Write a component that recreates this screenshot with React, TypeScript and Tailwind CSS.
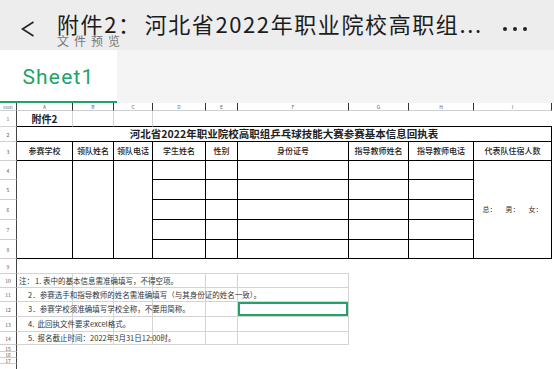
import React from "react";

const CJK = { fontFamily: '"Noto Sans CJK SC", "Noto Sans", sans-serif' };

const B = "border-black";

function RowHead({ n, row }: { n: string; row: string }) {
  return (
    <div
      className={`col-start-1 ${row} border-r border-b border-r-[#444] border-b-[#cfcfcf] flex items-center justify-center text-[5px] leading-none text-[#555]`}
    >
      {n}
    </div>
  );
}

export default function App() {
  const colLetters = ["A", "B", "C", "D", "E", "F", "G", "H", "I"];
  const colStarts = [
    "col-start-2",
    "col-start-3",
    "col-start-4",
    "col-start-5",
    "col-start-6",
    "col-start-7",
    "col-start-8",
    "col-start-9",
    "col-start-10",
  ];
  const heads = [
    "参赛学校",
    "领队姓名",
    "领队电话",
    "学生姓名",
    "性别",
    "身份证号",
    "指导教师姓名",
    "指导教师电话",
    "代表队住宿人数",
  ];
  const dhCols = ["col-start-5", "col-start-6", "col-start-7", "col-start-8", "col-start-9"];
  const dataRows = ["row-start-5", "row-start-6", "row-start-7", "row-start-8", "row-start-9"];
  const noteRows = ["row-start-11", "row-start-12", "row-start-13", "row-start-14", "row-start-15"];
  const noteCols = ["col-start-2", "col-start-3", "col-start-4", "col-start-5", "col-start-6", "col-start-7"];
  const notes = [
    "1. 表中的基本信息需准确填写，不得空项。",
    "2．参赛选手和指导教师的姓名需准确填写（与其身份证的姓名一致）。",
    "3．参赛学校须准确填写学校全称，不要用简称。",
    "4.  此回执文件要求excel格式。",
    "5.  报名截止时间：2022年3月31日12:00时。",
  ];
  const rowNums = [
    "row-start-2",
    "row-start-3",
    "row-start-4",
    "row-start-5",
    "row-start-6",
    "row-start-7",
    "row-start-8",
    "row-start-9",
    "row-start-10",
    "row-start-11",
    "row-start-12",
    "row-start-13",
    "row-start-14",
    "row-start-15",
    "row-start-16",
    "row-start-17",
    "row-start-18",
    "row-start-19",
  ];

  return (
    <div className="w-[554px] h-[369px] overflow-hidden bg-white" style={CJK}>
      {/* Top bar */}
      <div className="h-[50px] bg-[#ededed] flex items-start">
        <div className="w-[57px] pt-[21px] pl-[21px]">
          <svg width="14" height="16" viewBox="0 0 14 16">
            <polyline points="12.5,1 1.5,8 12.5,15" fill="none" stroke="#222" strokeWidth="1.6" />
          </svg>
        </div>
        <div className="flex flex-col pt-[13px]">
          <div className="text-[22px] leading-[20px] text-[#1c1c1c] whitespace-nowrap tracking-[1.6px]">
            附件2：<span className="ml-[3px]">河北省2022年职业院校高职组...</span>
          </div>
          <div className="text-[12px] leading-[11px] text-[#777] tracking-[5px] mt-[2px]">文件预览</div>
        </div>
        <div className="ml-auto mr-[27px] mt-[27px] flex gap-[6px]">
          <span className="w-[4px] h-[4px] rounded-full bg-[#222]" />
          <span className="w-[4px] h-[4px] rounded-full bg-[#222]" />
          <span className="w-[4px] h-[4px] rounded-full bg-[#222]" />
        </div>
      </div>

      {/* Sheet tab bar */}
      <div className="h-[53px] bg-[#f4f4f4] flex">
        <div className="w-[117px] h-full bg-white border-b-2 border-[#21a366] flex items-center justify-center">
          <span
            className="text-[21px] text-[#21a366] tracking-[1.2px] pt-[4px]"
            style={{ fontFamily: "Roboto, 'Noto Sans', sans-serif" }}
          >
            Sheet1
          </span>
        </div>
      </div>

      {/* Sheet grid */}
      <div className="grid grid-cols-[17px_56px_41px_39px_53px_32px_111px_60px_65px_78px_2px] grid-rows-[8px_16px_15px_19px_19px_20px_20px_20px_19px_15px_14px_14px_15px_15px_13px_7px_6px_6px_6px] text-[#222]">
        {/* corner */}
        <div className="col-start-1 row-start-1 border-r border-b border-r-[#444] border-b-[#cfcfcf] flex items-center justify-center text-[4px] leading-none text-[#666]">
          Excel
        </div>
        {colLetters.map((c, i) => (
          <div
            key={c}
            className={`${colStarts[i]} row-start-1 border-r border-b border-r-[#333] border-b-[#cfcfcf] flex items-center justify-center text-[5px] leading-none text-[#666]`}
          >
            {c}
          </div>
        ))}

        {/* row numbers */}
        {rowNums.map((r, i) => (
          <RowHead key={r} n={i < 17 ? String(i + 1) : ""} row={r} />
        ))}

        {/* row 1 */}
        <div className="col-start-2 row-start-2 border-r border-b border-r-[#d4d4d4] border-b-black flex items-center justify-center text-[10px] font-bold">
          附件2
        </div>
        <div className="col-start-3 row-start-2 border-r border-b border-r-[#d4d4d4] border-b-black" />
        <div className="col-start-4 row-start-2 border-r border-b border-r-[#d4d4d4] border-b-black" />
        <div className="col-start-5 col-span-6 row-start-2 border-b border-b-black" />

        {/* row 2 title */}
        <div className={`col-start-2 col-span-9 row-start-3 border-r border-b ${B} flex items-center justify-center text-[10.5px] font-bold whitespace-nowrap`}>
          河北省2022年职业院校高职组乒乓球技能大赛参赛基本信息回执表
        </div>

        {/* row 3 headers */}
        {heads.map((h, i) => (
          <div
            key={h}
            className={`${colStarts[i]} row-start-4 border-r border-b ${B} flex items-center justify-center text-[8px] font-medium whitespace-nowrap text-[#1a1a1a]`}
          >
            {h}
          </div>
        ))}

        {/* rows 4-8 */}
        <div className={`col-start-2 row-start-5 row-span-5 border-r border-b ${B}`} />
        <div className={`col-start-3 row-start-5 row-span-5 border-r border-b ${B}`} />
        <div className={`col-start-4 row-start-5 row-span-5 border-r border-b ${B}`} />
        {dataRows.map((r) =>
          dhCols.map((c) => <div key={r + c} className={`${c} ${r} border-r border-b ${B}`} />)
        )}
        <div className={`col-start-10 row-start-5 row-span-5 border-r border-b ${B} flex items-center justify-center gap-[9px] text-[7px] text-[#333]`}>
          <span>总：</span>
          <span>男：</span>
          <span>女：</span>
        </div>

        {/* row 9 */}
        <div className="col-start-2 col-span-6 row-start-10 border-b border-b-[#d4d4d4]" />

        {/* rows 10-14 notes */}
        {noteRows.map((r, ri) => (
          <React.Fragment key={r}>
            {noteCols.map((c, ci) => (
              <div
                key={c}
                className={`${c} ${r} border-r border-b border-[#d4d4d4] ${
                  ri === 2 && ci === 5 ? "shadow-[inset_0_0_0_2px_#21a366]" : ""
                } ${ci === 0 ? "relative" : ""}`}
              >
                {ci === 0 && (
                  <div
                    className={`absolute top-0 bottom-0 flex items-center whitespace-pre text-[7.5px] leading-none text-[#333] ${
                      ri === 0 ? "left-[2px]" : "left-[11px]"
                    }`}
                  >
                    {ri === 0 ? (
                      <>
                        <span className="mr-[1px]">注：</span>
                        {notes[0]}
                      </>
                    ) : (
                      notes[ri]
                    )}
                  </div>
                )}
              </div>
            ))}
          </React.Fragment>
        ))}
      </div>
    </div>
  );
}
